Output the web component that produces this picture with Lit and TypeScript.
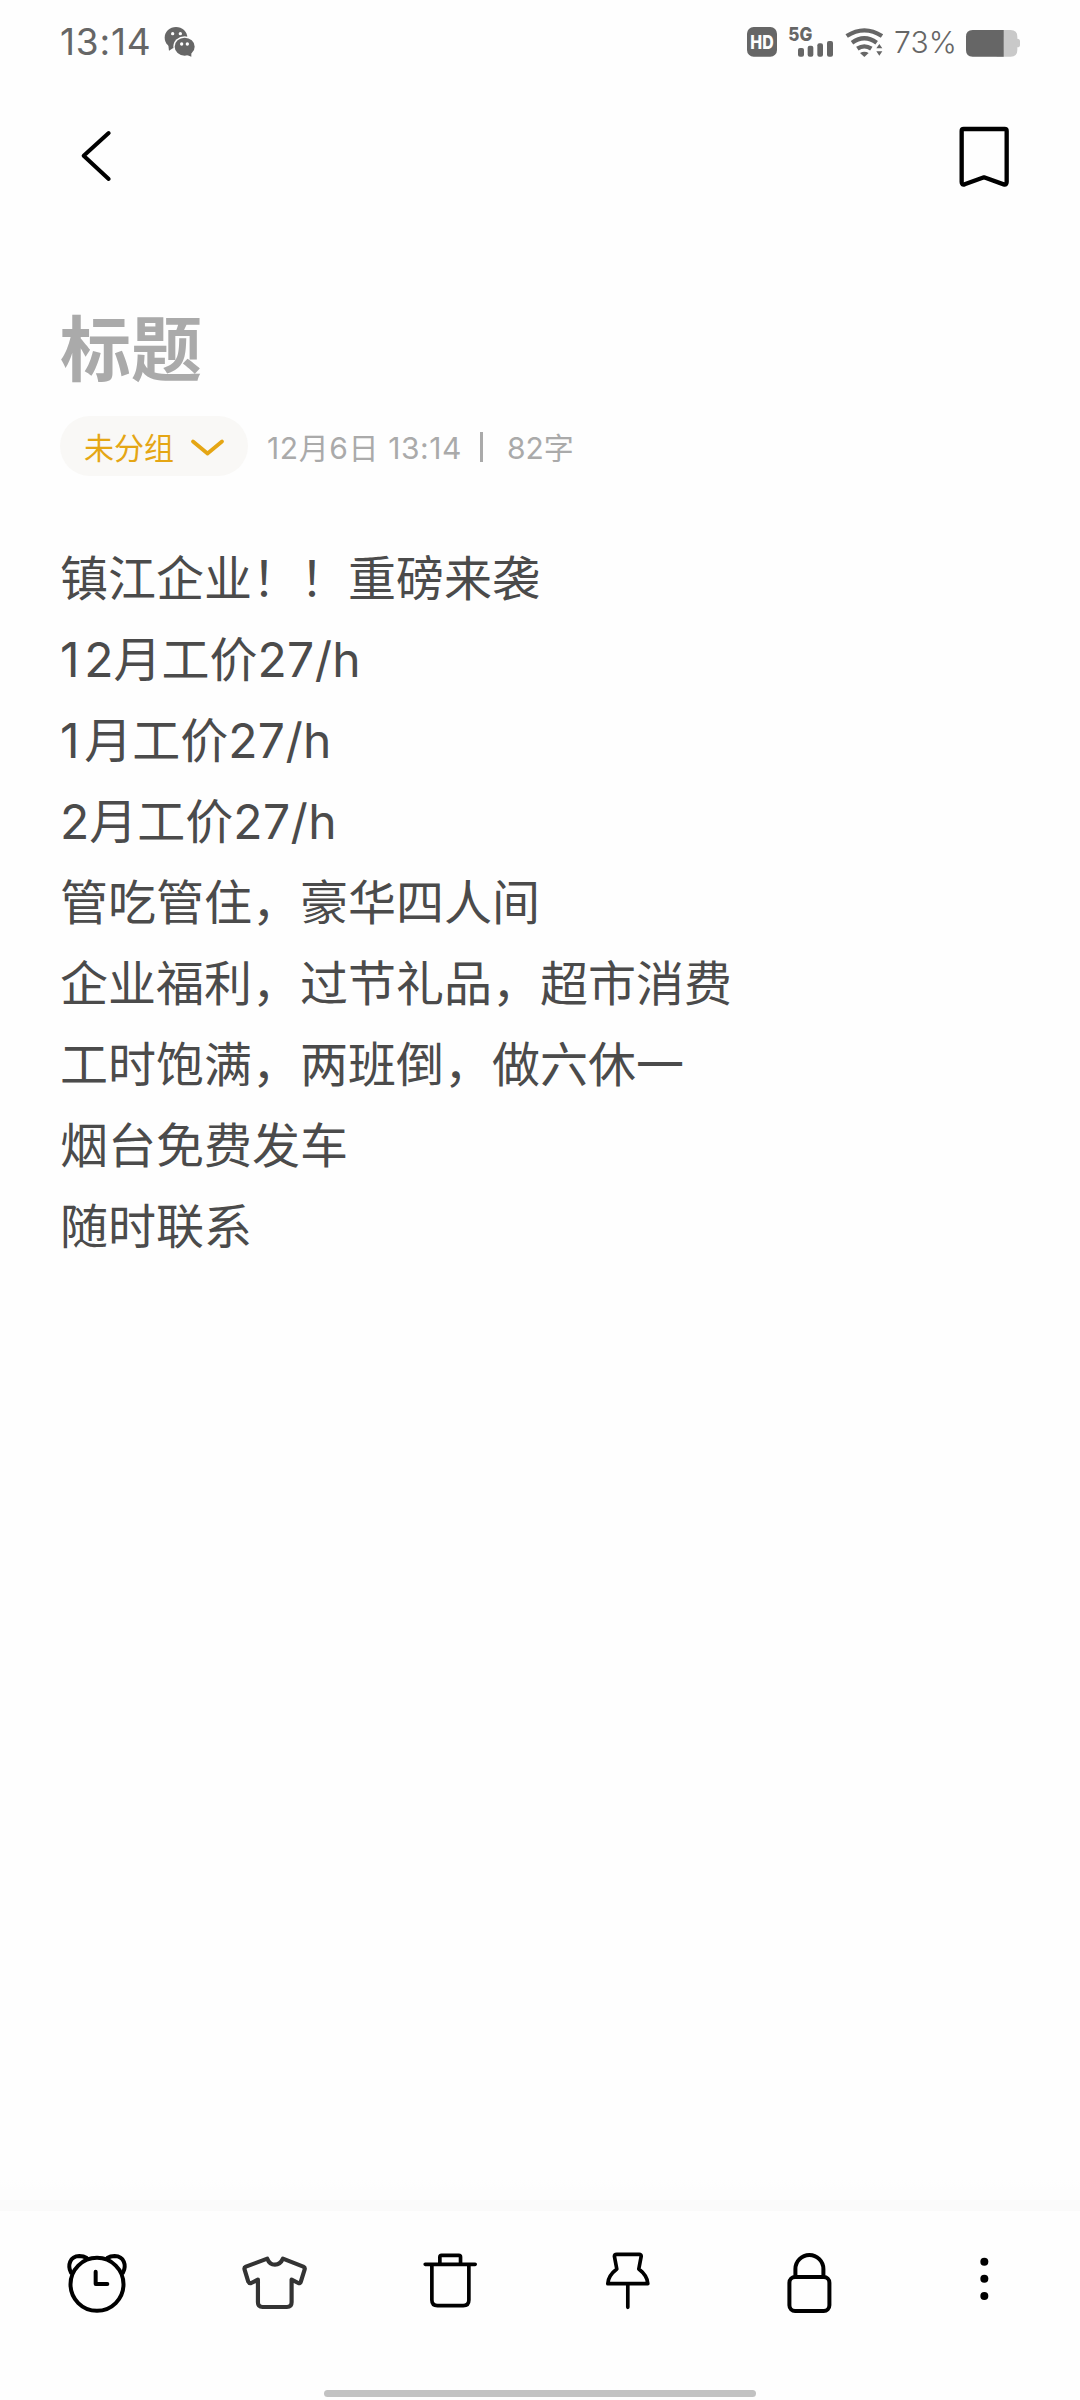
import { LitElement, html, css, svg } from "lit";
import { customElement } from "lit/decorators.js";

const TOOLS = [
  {
    box: "66 180 210 210",
    art: svg`<g stroke="#000" stroke-width="12"><circle cx="171" cy="283" r="79.5"/><path d="M93 248C82 226 89 199 118 198Q131 198 140 204M249 248C260 226 253 199 224 198Q211 198 202 204"/><path d="M167 245V282H202"/></g>`,
  },
  {
    box: "598.2 180 210 210",
    art: svg`<path stroke="#333" stroke-width="12.500" d="M683 206Q690 224 706 224Q722 224 730 206L791 230Q797 233 795 239L784 274Q782 281 776 279L756 269V337Q756 351 742 351H669Q655 351 655 337V269L635 279Q629 281 626 275L615 239Q613 233 619 230Z"/>`,
  },
  {
    box: "80.4 180 210 210",
    art: svg`<path stroke="#000" stroke-width="11" d="M105 223H255M149 223V201Q149 196 154 196H206Q211 196 211 201V223M125 223V330Q125 347 142 347H219Q236 347 236 330V223"/>`,
  },
  {
    box: "612.6 180 210 210",
    art: svg`<path stroke="#000" stroke-width="11" d="M681 193H748Q755 193 754 200L747 237Q773 257 774 281H654Q655 257 681 237L674 200Q673 193 681 193ZM714 281V352"/>`,
  },
  {
    box: "64.8 180 210 210",
    art: svg`<g stroke="#000" stroke-width="12"><rect x="117" y="261" width="120" height="102" rx="17"/><path d="M135 261V237A42 42 0 0 1 219 237V261"/></g>`,
  },
  {
    box: "597 180 210 210",
    art: svg`<g fill="#000"><circle cx="703" cy="215" r="12"/><circle cx="703" cy="266" r="12"/><circle cx="703" cy="318" r="12"/></g>`,
  },
];

const one = html`<span class="one">1</span>`;
const rate = html`<span class="rate">27/h</span>`;

const LINES = [
  html`镇江企业！！重磅来袭`,
  html`${one}2月工价${rate}`,
  html`${one}月工价${rate}`,
  html`2月工价${rate}`,
  html`管吃管住，豪华四人间`,
  html`企业福利，过节礼品，超市消费`,
  html`工时饱满，两班倒，做六休一`,
  html`烟台免费发车`,
  html`随时联系`,
];

@customElement("app-root")
export class AppRoot extends LitElement {
  static styles = css`
    :host {
      display: flex;
      flex-direction: column;
      box-sizing: border-box;
      width: 1080px;
      height: 2400px;
      overflow: hidden;
      background: #fefefe;
      font-family: Inter, "Noto Sans CJK SC", sans-serif;
      color: #4b4b4b;
    }
    svg {
      display: block;
      flex: none;
      overflow: visible;
      fill: none;
      stroke-linecap: round;
      stroke-linejoin: round;
    }
    .status {
      display: flex;
      align-items: center;
      height: 70px;
      padding: 7px 60px 0;
      color: #666;
    }
    .time {
      width: 104px;
      font-size: 37px;
      line-height: 70px;
      letter-spacing: 0.8px;
      white-space: nowrap;
    }
    .spacer {
      flex: 1;
    }
    .pct {
      width: 72px;
      padding-left: 11px;
      font-size: 30px;
      font-weight: 300;
      line-height: 70px;
      letter-spacing: 0.2px;
      white-space: nowrap;
    }
    .glyph {
      font-family: Inter, sans-serif;
      font-weight: 800;
      stroke: none;
    }
    .nav {
      display: flex;
      justify-content: space-between;
      height: 110px;
      padding: 23px 50px 0 60px;
    }
    .note {
      flex: 1;
      padding: 0 60px;
    }
    .title {
      margin: 95px 0 0;
      height: 88px;
      font-size: 71px;
      line-height: 88px;
      font-weight: 700;
      color: #aaa;
    }
    .meta {
      display: flex;
      align-items: center;
      height: 60px;
      margin-top: 23px;
      font-size: 30px;
      color: #aaa;
      white-space: nowrap;
    }
    .group {
      display: flex;
      align-items: center;
      box-sizing: border-box;
      width: 188px;
      height: 60px;
      padding-left: 24px;
      border-radius: 30px;
      background: #f9f8f6;
      color: #e5a614;
      gap: 16px;
    }
    .date {
      width: 194px;
      margin-left: 19px;
      letter-spacing: 0.6px;
    }
    .bar {
      width: 3px;
      height: 30px;
      margin: 2px 24px 0 19px;
      background: #aaa;
    }
    .body {
      margin-top: 62px;
      font-size: 48px;
      line-height: 81px;
    }
    .line {
      height: 81px;
      white-space: nowrap;
    }
    .one {
      letter-spacing: 4.6px;
    }
    .rate {
      letter-spacing: 0.4px;
    }
    .shade {
      height: 31px;
      background: linear-gradient(#fefefe, #fdfdfd 10px 20px, #fafafa 20px);
    }
    .tools {
      display: flex;
      justify-content: space-between;
      height: 112px;
      padding: 39px 61px 0 62px;
    }
    .home {
      width: 432px;
      height: 7px;
      margin: 28px auto 3px;
      border-radius: 4px;
      background: #c2c2c2;
    }
  `;

  render() {
    return html`
      <div class="status">
        <span class="time">13:14</span>
        <svg width="32" height="32" viewBox="373 48 96 96">
          <g fill="#666">
            <path d="M386 106L388 122L404 112Z" />
            <ellipse cx="409" cy="83" rx="34" ry="32" />
            <ellipse cx="435" cy="110" rx="34" ry="31" fill="#fefefe" />
            <ellipse cx="435" cy="110" rx="30" ry="27" />
            <path d="M440 134L455 140L455 126Z" />
          </g>
          <g fill="#fefefe">
            <circle cx="399" cy="71" r="5" /><circle cx="422" cy="71" r="5" />
            <circle cx="426" cy="102" r="5" /><circle cx="443" cy="102" r="5" />
          </g>
        </svg>
        <span class="spacer"></span>
        <svg width="90" height="32" viewBox="48 48 270 96">
          <rect x="51" y="51" width="90" height="89" rx="20" fill="#666" />
          <text class="glyph" x="61" y="117" font-size="56" textLength="70" lengthAdjust="spacingAndGlyphs" fill="#fefefe">HD</text>
          <text class="glyph" x="175" y="94" font-size="57" textLength="72" lengthAdjust="spacingAndGlyphs" fill="#666">5G</text>
          <g fill="#666">
            <rect x="204" y="114" width="18" height="26" rx="6" />
            <rect x="233" y="107" width="17" height="33" rx="6" />
            <rect x="262" y="100" width="17" height="40" rx="6" />
            <rect x="291" y="93" width="18" height="47" rx="6" />
          </g>
        </svg>
        <svg width="47" height="32" viewBox="318 48 141 96">
          <g stroke="#666" stroke-width="13" stroke-linecap="butt">
            <path d="M350 78Q403 44 456 78" />
            <path d="M366 98Q403 72 440 98" />
            <path d="M382 116Q403 102 424 116" />
          </g>
          <g fill="#666">
            <path d="M390 129Q403 121 416 129L403 141Z" />
            <path d="M439 115L448 102L457 115ZM439 124L448 137L457 124Z" />
          </g>
        </svg>
        <span class="pct">73%</span>
        <svg width="54" height="32" viewBox="708 48 162 96">
          <path fill="#c9c9c9" d="M800 60H842Q862 60 862 80V86Q870 86 870 94V105Q870 112 862 112V120Q862 140 842 140H800Z" />
          <path fill="#666" d="M728 60H821V140H728Q708 140 708 120V80Q708 60 728 60Z" />
        </svg>
      </div>

      <div class="nav">
        <svg width="100" height="110" viewBox="0 -30 300 330">
          <path stroke="#000" stroke-width="12" d="M146 69L71 137.500L146 207" />
        </svg>
        <svg width="100" height="110" viewBox="0 0 300 330">
          <path stroke="#000" stroke-width="13" d="M101 87H224Q230 87 230 93V246Q230 256 221 253L162 232L104 253Q95 256 95 246V93Q95 87 101 87Z" />
        </svg>
      </div>

      <div class="note">
        <h1 class="title">标题</h1>
        <div class="meta">
          <div class="group">
            <span>未分组</span>
            <svg width="34" height="20" viewBox="0 0 34 20">
              <path stroke="#e5a614" stroke-width="3.8" d="M3 5.500L17.500 17.500L32 5.500" />
            </svg>
          </div>
          <span class="date">12月6日 13:14</span>
          <span class="bar"></span>
          <span>82字</span>
        </div>
        <div class="body">${LINES.map((l) => html`<div class="line">${l}</div>`)}</div>
      </div>

      <div class="shade"></div>
      <div class="tools">
        ${TOOLS.map((t) => html`<svg width="70" height="70" viewBox=${t.box}>${t.art}</svg>`)}
      </div>
      <div class="home"></div>
    `;
  }
}
